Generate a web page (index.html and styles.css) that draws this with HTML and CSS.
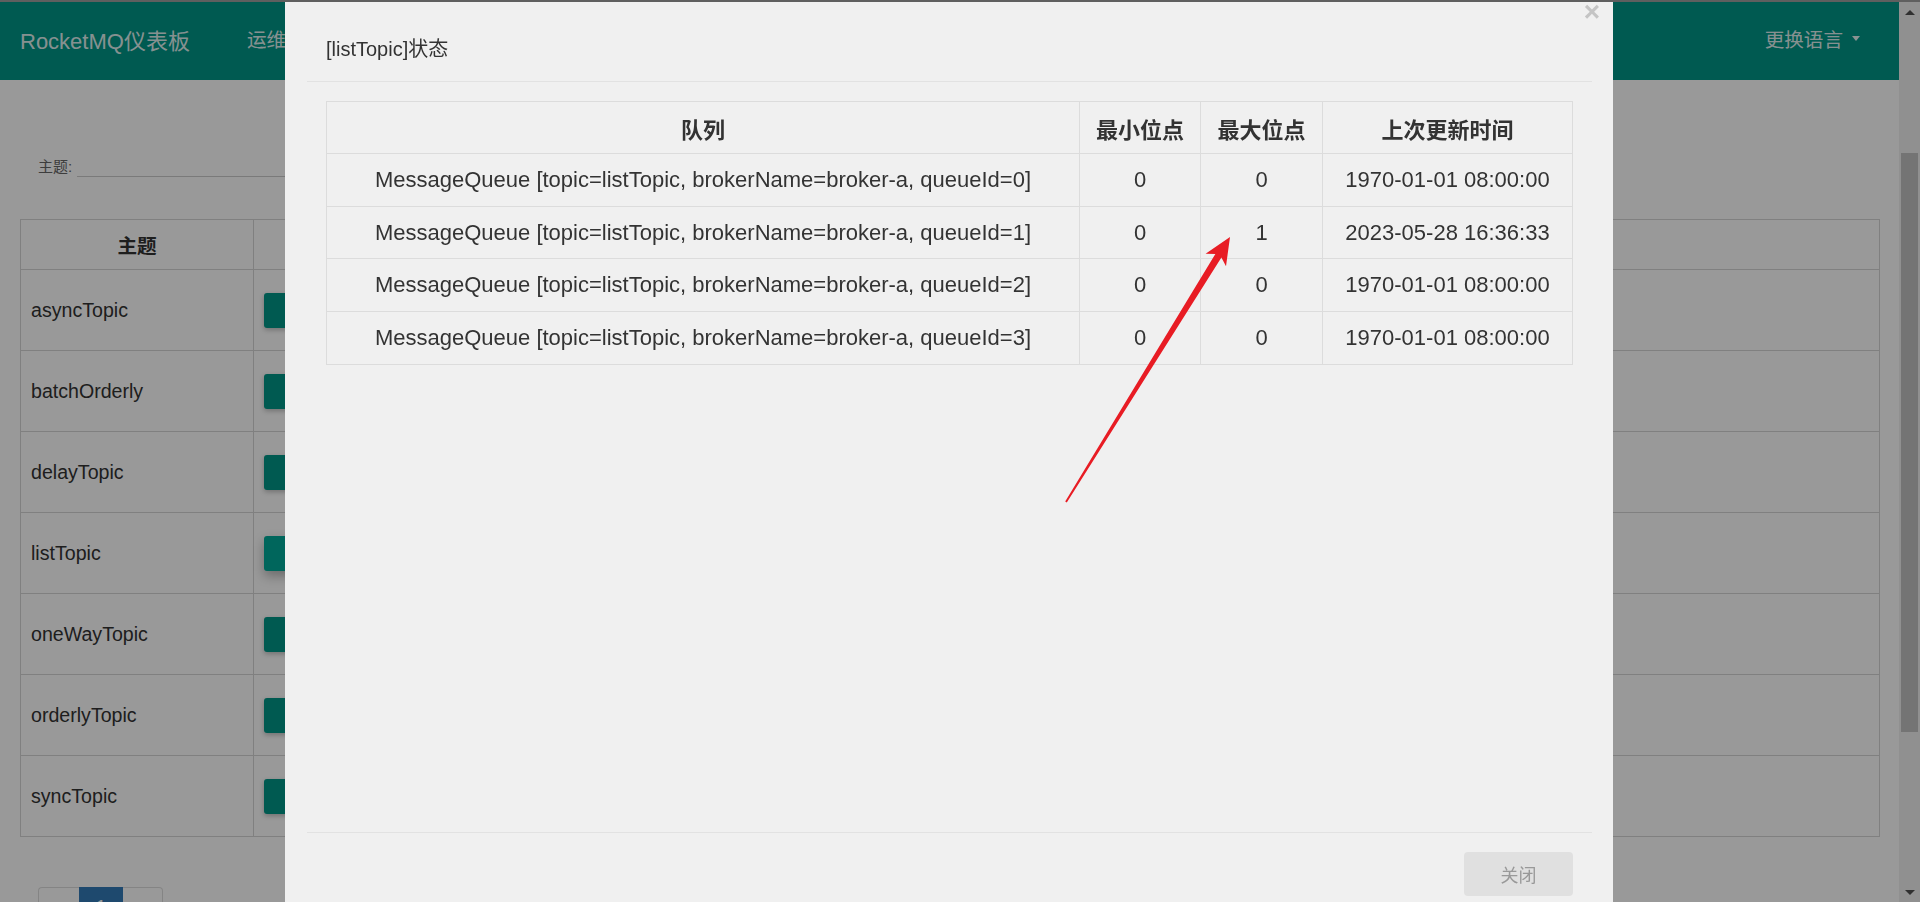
FILE: index.html
```html
<!DOCTYPE html>
<html lang="zh-CN">
<head>
    <meta charset="UTF-8">
    <meta name="viewport" content="width=device-width, initial-scale=1.0">
    <title>RocketMQ仪表板</title>
    <link rel="stylesheet" href="styles.css">
</head>
<body>
    <div class="page">
        <nav class="navbar">
            <div class="brand">RocketMQ仪表板</div>
            <ul class="nav">
                <li>运维</li>
            </ul>
            <div class="lang">更换语言 <span class="caret"></span></div>
        </nav>

        <div class="content">
            <div class="search">
                <label>主题:</label>
                <input class="search-input" type="text">
            </div>

            <table class="topic-table">
                <colgroup>
                    <col class="col-name">
                    <col>
                </colgroup>
                <thead>
                    <tr><th>主题</th><th></th></tr>
                </thead>
                <tbody>
                    <tr><td>asyncTopic</td><td><button class="op-btn"></button></td></tr>
                    <tr><td>batchOrderly</td><td><button class="op-btn"></button></td></tr>
                    <tr><td>delayTopic</td><td><button class="op-btn"></button></td></tr>
                    <tr><td>listTopic</td><td><button class="op-btn active"></button></td></tr>
                    <tr><td>oneWayTopic</td><td><button class="op-btn"></button></td></tr>
                    <tr><td>orderlyTopic</td><td><button class="op-btn"></button></td></tr>
                    <tr><td>syncTopic</td><td><button class="op-btn"></button></td></tr>
                </tbody>
            </table>

            <ul class="pagination">
                <li class="prev">«</li>
                <li class="current">1</li>
                <li class="next">»</li>
            </ul>
        </div>
    </div>

    <div class="scrollbar">
        <span class="scroll-up"></span>
        <div class="scroll-thumb"></div>
        <span class="scroll-down"></span>
    </div>

    <div class="modal-backdrop"></div>

    <div class="modal-dialog">
        <div class="modal-content">
            <span class="close">×</span>
            <div class="modal-header">
                <h4 class="modal-title">[listTopic]状态</h4>
            </div>
            <div class="modal-body">
                <table class="queue-table">
                    <colgroup>
                        <col class="col-queue">
                        <col class="col-min">
                        <col class="col-max">
                        <col class="col-time">
                    </colgroup>
                    <thead>
                        <tr><th>队列</th><th>最小位点</th><th>最大位点</th><th>上次更新时间</th></tr>
                    </thead>
                    <tbody>
                        <tr><td>MessageQueue [topic=listTopic, brokerName=broker-a, queueId=0]</td><td>0</td><td>0</td><td>1970-01-01 08:00:00</td></tr>
                        <tr><td>MessageQueue [topic=listTopic, brokerName=broker-a, queueId=1]</td><td>0</td><td>1</td><td>2023-05-28 16:36:33</td></tr>
                        <tr><td>MessageQueue [topic=listTopic, brokerName=broker-a, queueId=2]</td><td>0</td><td>0</td><td>1970-01-01 08:00:00</td></tr>
                        <tr><td>MessageQueue [topic=listTopic, brokerName=broker-a, queueId=3]</td><td>0</td><td>0</td><td>1970-01-01 08:00:00</td></tr>
                    </tbody>
                </table>
            </div>
            <div class="modal-footer">
                <button class="close-btn">关闭</button>
            </div>
        </div>
    </div>

    <!-- annotation arrow -->
    <svg class="annotation" viewBox="0 0 1920 902" width="1920" height="902">
        <polygon fill="#e81c24" points="1230,237 1226,266.3 1221.4,257.5 1066.8,502.6 1065.2,501.4 1215.4,253.9 1205.6,253.7"/>
    </svg>
</body>
</html>
```

FILE: styles.css
```css
html {
    border-top: 2px solid #5f5f5f;
}

body {
    margin: 0;
    font-family: "Liberation Sans", "Noto Sans CJK SC", sans-serif;
    color: #333;
    background: #fff;
    overflow: hidden;
    height: 900px;
}

.page {
    margin-right: 21px;
}

/* top bar */
.navbar {
    height: 78px;
    background: #009688;
    color: rgba(255, 255, 255, 0.9);
    display: flex;
    align-items: center;
    padding: 0 39px 5px 20px;
    box-sizing: border-box;
    white-space: nowrap;
}

.brand {
    font-size: 22px;
    margin-right: 57px;
}

.nav {
    display: flex;
    gap: 40px;
    list-style: none;
    margin: 0;
    padding: 0;
    font-size: 19.6px;
    flex-grow: 1;
}

.lang {
    font-size: 19.6px;
    display: flex;
    align-items: center;
}

.caret {
    display: inline-block;
    margin-left: 9px;
    border-top: 5px solid rgba(255, 255, 255, 0.9);
    border-left: 4px solid transparent;
    border-right: 4px solid transparent;
}

/* page content */
.content {
    padding: 0 19px 0 20px;
}

.search {
    display: flex;
    align-items: flex-end;
    height: 25px;
    margin: 72px 0 0 18px;
}

.search label {
    font-size: 15px;
    line-height: 20px;
    color: #666;
    margin-right: 5px;
}

.search-input {
    width: 260px;
    height: 25px;
    border: none;
    border-bottom: 1px solid #ccc;
    background: transparent;
    padding: 0;
}

.topic-table {
    width: 100%;
    margin-top: 42px;
    border-collapse: collapse;
    table-layout: fixed;
    font-size: 19.6px;
}

.col-name {
    width: 233px;
}

.topic-table th,
.topic-table td {
    border: 1px solid #d6d6d6;
    padding: 0 10px;
}

.topic-table th {
    height: 49px;
    font-weight: bold;
}

.topic-table td {
    height: 80px;
}

.op-btn {
    height: 35px;
    width: 110px;
    border: none;
    border-radius: 3px;
    background: #009688;
    box-shadow: 0 2px 5px rgba(0, 0, 0, 0.26);
    vertical-align: middle;
}

.op-btn.active {
    background: #00ab9a;
    box-shadow: 0 5px 12px rgba(0, 0, 0, 0.3);
}

.pagination {
    display: flex;
    list-style: none;
    margin: 50px 0 0 18px;
    padding: 0;
}

.pagination li {
    box-sizing: border-box;
    height: 40px;
    line-height: 38px;
    text-align: center;
    border: 1px solid #ddd;
    font-size: 18px;
}

.pagination .prev {
    width: 41px;
    border-right: none;
    border-radius: 4px 0 0 4px;
}

.pagination .next {
    width: 40px;
    border-left: none;
    border-radius: 0 4px 4px 0;
}

.pagination .current {
    width: 44px;
    background: #337ab7;
    border-color: #337ab7;
    color: #fff;
}

/* window scrollbar */
.scrollbar {
    position: fixed;
    top: 2px;
    right: 0;
    bottom: 0;
    width: 21px;
    background: #f1f1f1;
}

.scroll-thumb {
    position: absolute;
    top: 151px;
    left: 2px;
    width: 17px;
    height: 579px;
    background: #c1c1c1;
}

.scroll-up,
.scroll-down {
    position: absolute;
    left: 6px;
    border-left: 5px solid transparent;
    border-right: 5px solid transparent;
}

.scroll-up {
    top: 8px;
    border-bottom: 5px solid #505050;
}

.scroll-down {
    bottom: 7px;
    border-top: 5px solid #505050;
}

/* modal */
.modal-backdrop {
    position: fixed;
    top: 2px;
    left: 0;
    right: 0;
    bottom: 0;
    background: rgba(0, 0, 0, 0.4);
}

.modal-dialog {
    position: fixed;
    top: 2px;
    left: 285px;
    width: 1328px;
}

.modal-content {
    position: relative;
    background: #f0f0f0;
    padding: 0 21px 0 22px;
}

.close {
    position: absolute;
    top: -4px;
    right: 13px;
    font-size: 28px;
    line-height: 1;
    font-weight: bold;
    color: #c4c4c4;
}

.modal-header {
    padding: 33px 19px 18px;
    border-bottom: 1px solid #e2e2e2;
}

.modal-title {
    margin: 0;
    font-size: 20px;
    line-height: 28px;
    font-weight: normal;
    color: #333;
}

.modal-body {
    height: 750px;
    box-sizing: border-box;
    padding: 19px 20px 0 19px;
}

.queue-table {
    width: 100%;
    border-collapse: collapse;
    table-layout: fixed;
    font-size: 22px;
    text-align: center;
}

.col-queue { width: 753px; }
.col-min { width: 121px; }
.col-max { width: 122px; }
.col-time { width: 250px; }

.queue-table th,
.queue-table td {
    border: 1px solid #dcdcdc;
    padding: 0 4px;
    white-space: nowrap;
}

.queue-table th {
    height: 51px;
    font-weight: bold;
}

.queue-table td {
    height: 51.7px;
}

.modal-footer {
    border-top: 1px solid #e2e2e2;
    padding: 19px 19px;
    display: flex;
    justify-content: flex-end;
}

.close-btn {
    width: 109px;
    height: 44px;
    border: none;
    border-radius: 4px;
    background: #e0e0e0;
    color: #999;
    font-family: inherit;
    font-size: 18px;
}

.annotation {
    position: fixed;
    top: 0;
    left: 0;
    pointer-events: none;
}
```
